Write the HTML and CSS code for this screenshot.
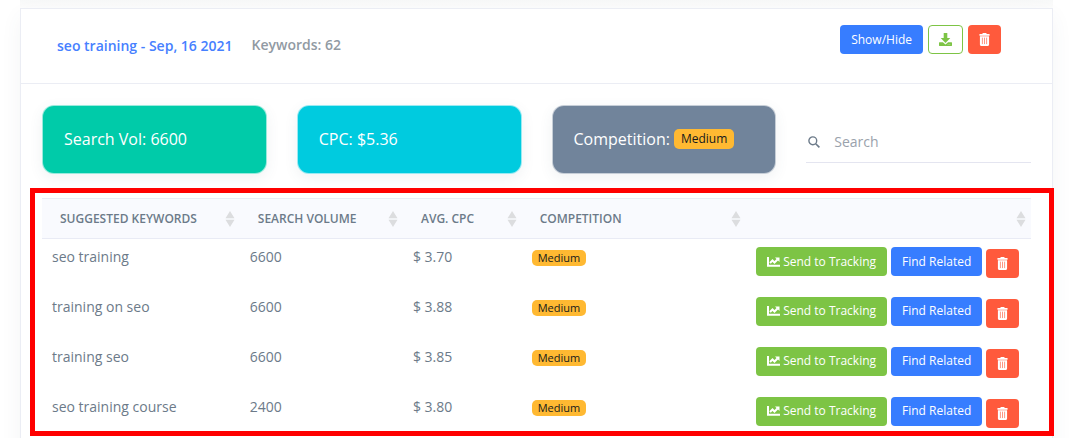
FILE: index.html
```html
<!DOCTYPE html>
<html lang="en">
<head>
<meta charset="utf-8">
<meta name="viewport" content="width=device-width, initial-scale=1">
<title>Keyword suggestions</title>
<link rel="stylesheet" href="styles.css">
</head>
<body>
<svg width="0" height="0" class="sprite" aria-hidden="true">
  <symbol id="trash" viewBox="0 0 12 14"><path fill="currentColor" fill-rule="evenodd" d="M3.500 1 4.200 0h3.600l.7 1h3v2H.5V1zM1 3.500h10v9c0 .8-.5 1.500-1.300 1.500H2.300C1.500 14 1 13.300 1 12.500z"/><path d="M3.700 5v7M6 5v7M8.300 5v7" stroke="#ff5a3c" stroke-width=".7"/></symbol>
  <symbol id="download" viewBox="0 0 13 14"><path fill="currentColor" fill-rule="evenodd" d="M4.700 0h3.600v5h3L6.500 10 1.700 5h3zM.5 9.200h3.400l2.600 2.300 2.600-2.300h3.400c.3 0 .5.200.5.500v2.800c0 .3-.2.500-.5.500H.5c-.3 0-.5-.2-.5-.5V9.700c0-.3.2-.5.500-.5zM8.700 11.400v.7h.7v-.7zm1.800 0v.7h.7v-.7z"/></symbol>
  <symbol id="chart" viewBox="0 0 13 10"><path fill="none" stroke="currentColor" stroke-width="2" d="M1 0v8.800h12M3 6l2.500-2.500L7.500 5.500 10.500 2.500"/><path fill="currentColor" d="M8 .5h4.500V5z"/></symbol>
  <symbol id="sort" viewBox="0 0 10 16"><path fill="currentColor" d="M5 0l4.500 7.200H.5zM.5 8.800h9L5 16z"/></symbol>
</svg>
<div class="previous"></div>
<main class="card">
  <header class="card-head">
    <a class="title" href="#">seo training - Sep, 16 2021</a>
    <span class="count">Keywords: 62</span>
    <div class="tools">
      <button class="btn blue">Show/Hide</button>
      <button class="btn outline" aria-label="Download"><svg class="icon-download"><use href="#download"/></svg></button>
      <button class="btn red" aria-label="Delete"><svg class="icon-trash"><use href="#trash"/></svg></button>
    </div>
  </header>
  <div class="card-body">
    <section class="stats">
      <div class="stat green">Search Vol: 6600</div>
      <div class="stat cyan">CPC: $5.36</div>
      <div class="stat slate">Competition: <span class="badge large">Medium</span></div>
      <label class="search" aria-label="Search">
        <svg class="icon-search" viewBox="0 0 12 12"><circle cx="4.800" cy="4.800" r="3.900" fill="none" stroke="currentColor" stroke-width="1.400"/><path d="M7.700 7.700l3.700 3.700" stroke="currentColor" stroke-width="1.600"/></svg>
        <input type="search" placeholder="Search">
      </label>
    </section>
    <div class="table-wrap">
      <table>
        <colgroup><col class="c-keyword"><col class="c-volume"><col class="c-cpc"><col class="c-competition"><col></colgroup>
        <thead>
          <tr>
            <th><div class="th">Suggested Keywords<svg class="icon-sort"><use href="#sort"/></svg></div></th>
            <th><div class="th">Search Volume<svg class="icon-sort"><use href="#sort"/></svg></div></th>
            <th><div class="th">Avg. CPC<svg class="icon-sort"><use href="#sort"/></svg></div></th>
            <th><div class="th">Competition<svg class="icon-sort"><use href="#sort"/></svg></div></th>
            <th aria-label="Actions"><div class="th"><svg class="icon-sort"><use href="#sort"/></svg></div></th>
          </tr>
        </thead>
        <tbody>
          <tr><td>seo training</td><td>6600</td><td>$ 3.70</td><td><span class="badge">Medium</span></td>
            <td><div class="actions"><button class="btn lime"><svg class="icon-chart"><use href="#chart"/></svg>Send to Tracking</button><button class="btn blue">Find Related</button><button class="btn red" aria-label="Delete"><svg class="icon-trash"><use href="#trash"/></svg></button></div></td></tr>
          <tr><td>training on seo</td><td>6600</td><td>$ 3.88</td><td><span class="badge">Medium</span></td>
            <td><div class="actions"><button class="btn lime"><svg class="icon-chart"><use href="#chart"/></svg>Send to Tracking</button><button class="btn blue">Find Related</button><button class="btn red" aria-label="Delete"><svg class="icon-trash"><use href="#trash"/></svg></button></div></td></tr>
          <tr><td>training seo</td><td>6600</td><td>$ 3.85</td><td><span class="badge">Medium</span></td>
            <td><div class="actions"><button class="btn lime"><svg class="icon-chart"><use href="#chart"/></svg>Send to Tracking</button><button class="btn blue">Find Related</button><button class="btn red" aria-label="Delete"><svg class="icon-trash"><use href="#trash"/></svg></button></div></td></tr>
          <tr><td>seo training course</td><td>2400</td><td>$ 3.80</td><td><span class="badge">Medium</span></td>
            <td><div class="actions"><button class="btn lime"><svg class="icon-chart"><use href="#chart"/></svg>Send to Tracking</button><button class="btn blue">Find Related</button><button class="btn red" aria-label="Delete"><svg class="icon-trash"><use href="#trash"/></svg></button></div></td></tr>
        </tbody>
      </table>
    </div>
  </div>
</main>
</body>
</html>
```
FILE: styles.css
```css
* { box-sizing: border-box; }
html, body { height: 100%; overflow: hidden; }
body {
  margin: 0;
  padding: 0 20px;
  background: #fff;
  color: #6c7a89;
  font-family: "Open Sans", "Noto Sans", sans-serif;
  font-size: 14px;
  line-height: 20px;
}
.sprite { position: absolute; }
.previous { height: 8px; background: linear-gradient(#f7f8f8, #fdfdfd); }
.card {
  border: 1px solid #ebedf4;
  background: #fff;
  box-shadow: 0 8px 20px rgba(69, 90, 100, 0.06);
}
.card-head {
  display: flex;
  align-items: flex-start;
  gap: 19px;
  min-height: 75px;
  padding: 16px 51px 16px 36px;
  border-bottom: 1px solid #ebedf4;
}
.title, .count { padding-top: 10px; font-weight: 600; }
.title { padding-top: 11px; color: #4680ff; text-decoration: none; }
.count { color: #919aa3; }
.tools { display: flex; gap: 5px; margin-left: auto; }
.btn {
  display: inline-flex;
  align-items: center;
  justify-content: center;
  gap: 3px;
  height: 29px;
  padding: 0 10px;
  border: 1px solid transparent;
  border-radius: 4px;
  color: #fff;
  font: 12px/18px "Open Sans", "Noto Sans", sans-serif;
  white-space: nowrap;
  cursor: pointer;
}
.blue { background: #377dff; }
.red { background: #ff5a3c; }
.lime { background: #7dc445; }
.outline { border-color: #7dc445; background: #fff; color: #7dc445; }
.icon-trash { width: 11px; height: 13px; }
.icon-download { width: 13px; height: 14px; }
.icon-chart { width: 13px; height: 10px; }
.icon-search { flex: none; width: 12px; height: 12px; color: #6c7a89; }
.icon-sort { flex: none; width: 10px; height: 16px; margin-left: auto; color: #dcdddf; }
.card-body { padding: 21px; }
.stats { display: grid; grid-template-columns: repeat(4, 1fr); gap: 30px; }
.stat {
  display: flex;
  align-items: center;
  gap: 4px;
  height: 69px;
  padding: 0 21px 2px;
  border: 1px solid rgba(255, 255, 255, 0.6);
  border-radius: 12px;
  box-shadow: 0 4px 14px rgba(69, 90, 100, 0.08);
  color: #fff;
  font-size: 16px;
}
.green { background: #00cba9; }
.cyan { background: #00cbdf; }
.slate { background: #71849b; }
.badge {
  display: inline-block;
  padding: 0 6px;
  border-radius: 5px;
  background: #ffb932;
  color: #16191c;
  font-size: 11px;
  line-height: 16px;
}
.badge.large { padding: 0 7px; font-size: 12px; line-height: 20px; }
.search {
  display: flex;
  align-items: center;
  align-self: end;
  gap: 14px;
  height: 42px;
  margin-bottom: 11px;
  padding-left: 2px;
  border-bottom: 1px solid #e4e5f0;
}
.search input {
  width: 100%;
  min-width: 0;
  padding: 0;
  border: 0;
  outline: 0;
  background: transparent;
  color: #6c7a89;
  font: inherit;
}
.search input::placeholder { color: #9aa2ac; }
.table-wrap { position: relative; margin-top: 24px; }
.table-wrap::after {
  content: "";
  position: absolute;
  inset: -10px -23px 3px -12px;
  border: 5px solid #f00;
  pointer-events: none;
}
table { width: 100%; border-collapse: collapse; table-layout: fixed; }
.c-keyword { width: 20%; }
.c-volume { width: 16.500%; }
.c-cpc { width: 12%; }
.c-competition { width: 22.700%; }
th {
  height: 40px;
  padding: 0 5px 0 18px;
  border-top: 1px solid #e9ebf5;
  border-bottom: 1px solid #e9ebf5;
  background: #f9fafe;
  font-size: 12px;
  font-weight: 600;
  text-align: left;
  text-transform: uppercase;
}
.th { display: flex; align-items: center; }
td { height: 50px; padding: 8px 10px 0; vertical-align: top; }
.actions { display: flex; gap: 4px; }
.actions .red { margin-top: 2px; }
```
